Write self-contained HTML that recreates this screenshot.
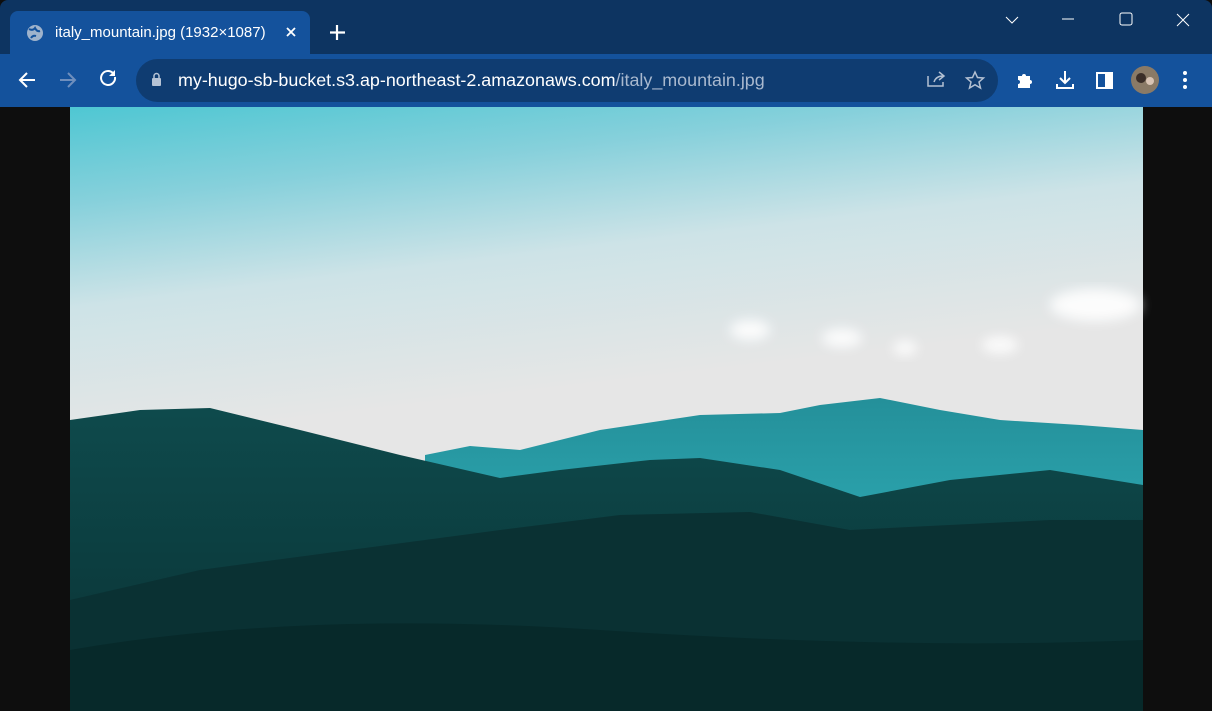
<!DOCTYPE html>
<html><head><style>
body{margin:0;width:1212px;height:711px;overflow:hidden;background:#0e0e0e;font-family:"Liberation Sans",sans-serif;position:relative}
.title{position:absolute;left:0;top:0;width:1212px;height:54px;background:#0d3461;border-radius:8px 8px 0 0}
.tab{position:absolute;left:10px;top:11px;width:300px;height:43px;background:#14529c;border-radius:8px 8px 0 0}
.tb{position:absolute;left:0;top:54px;width:1212px;height:53px;background:#14529c}
.omni{position:absolute;left:136px;top:59px;width:862px;height:43px;border-radius:22px;background:#0f3c71}
.t{position:absolute;color:#fff;white-space:nowrap}
</style></head><body>
<div class="title"></div>
<div class="tab"></div>
<div class="tb"></div>
<div class="omni"></div>
<svg style="position:absolute;left:0;top:0" width="1212" height="107">
<circle cx="35" cy="33" r="8" fill="#9fb3cc"/>
<path d="M29 29 q4 2 6 -1 q2 4 5 3 M31 38 q2-3 5-2" stroke="#14529c" stroke-width="2" fill="none"/>
<path d="M287 28l8 8M295 28l-8 8" stroke="#fff" stroke-width="1.8"/>
<path d="M337 25v15M330 32.5h15" stroke="#fff" stroke-width="2.2"/>
<path d="M1006 17l6 6 6-6" stroke="#fff" stroke-width="1" fill="none"/>
<path d="M1062 19h12" stroke="#fff" stroke-width="1"/>
<rect x="1120" y="13" width="12" height="12" rx="2" stroke="#fff" fill="none"/>
<path d="M1177 14l12 12M1189 14l-12 12" stroke="#fff" stroke-width="1"/>
<path d="M35 80h-15M27 73l-7 7 7 7" stroke="#fff" stroke-width="2" fill="none"/>
<path d="M60 80h15M68 73l7 7-7 7" stroke="#6f8fbd" stroke-width="2" fill="none"/>
<path d="M115 77a7 7 0 1 1-2-4" stroke="#fff" stroke-width="2" fill="none"/><path d="M115 70v6h-6z" fill="#fff"/>
<rect x="152" y="78" width="9" height="8" rx="1" fill="#b6c3d5"/><path d="M154 78v-2a2.5 2.5 0 0 1 5 0v2" stroke="#b6c3d5" stroke-width="1.5" fill="none"/>
<path d="M928 76v10h15v-4M934 82q2-6 9-6M939 72l5 4-5 4" stroke="#b3c0d2" stroke-width="1.5" fill="none"/>
<path d="M975 72l2.5 5.5 6 .5-4.5 4 1.5 6-5.5-3.3-5.5 3.3 1.5-6-4.5-4 6-.5z" stroke="#b3c0d2" stroke-width="1.5" fill="none"/>
<path d="M1018 76h4a2 2 0 0 1 4 0h4v4a2 2 0 0 1 0 4v4h-12v-4a2 2 0 0 0 0-4z" fill="#fff"/>
<path d="M1065 71v12M1060 78l5 5 5-5M1057 84v4h16v-4" stroke="#fff" stroke-width="2" fill="none"/>
<rect x="1097" y="73" width="15" height="15" stroke="#fff" stroke-width="2" fill="none"/><rect x="1105" y="73" width="7" height="15" fill="#fff"/>
<circle cx="1145" cy="80" r="14" fill="#8a7a66"/><circle cx="1141" cy="78" r="5" fill="#3b2e28"/><circle cx="1150" cy="81" r="4" fill="#d9c4b4"/>
<circle cx="1185" cy="73" r="2" fill="#fff"/><circle cx="1185" cy="80" r="2" fill="#fff"/><circle cx="1185" cy="87" r="2" fill="#fff"/>
</svg>
<div class="t" style="left:55px;top:24px;font-size:15px;width:214px;overflow:hidden">italy_mountain.jpg (1932×1087)</div>
<div class="t" style="left:178px;top:70px;font-size:17.9px">my-hugo-sb-bucket.s3.ap-northeast-2.amazonaws.com<span style="color:#a9b9cf">/italy_mountain.jpg</span></div>
<svg style="position:absolute;left:0;top:107px" width="1212" height="604" viewBox="0 107 1212 604">
<defs>
<linearGradient id="sky" x1="0" y1="107" x2="40" y2="450" gradientUnits="userSpaceOnUse"><stop offset="0" stop-color="#4ac6d2"/><stop offset="0.3" stop-color="#86d0db"/><stop offset="0.6" stop-color="#cde3e7"/><stop offset="1" stop-color="#e6e6e6"/></linearGradient>
<linearGradient id="m1" x1="0" y1="400" x2="0" y2="500" gradientUnits="userSpaceOnUse"><stop offset="0" stop-color="#24909a"/><stop offset="1" stop-color="#2aa0aa"/></linearGradient>
<linearGradient id="m2" x1="0" y1="410" x2="0" y2="711" gradientUnits="userSpaceOnUse"><stop offset="0" stop-color="#0e4a4c"/><stop offset="1" stop-color="#0a3234"/></linearGradient>
<filter id="b"><feGaussianBlur stdDeviation="6"/></filter>
</defs>
<rect x="70" y="107" width="1073" height="604" fill="url(#sky)"/>
<g fill="#fff" opacity="0.9" filter="url(#b)"><ellipse cx="1095" cy="305" rx="45" ry="16"/><ellipse cx="750" cy="330" rx="20" ry="10"/><ellipse cx="842" cy="338" rx="20" ry="9"/><ellipse cx="905" cy="348" rx="12" ry="7"/><ellipse cx="1000" cy="345" rx="18" ry="8"/></g>
<path d="M425 455 L470 446 L520 450 L600 430 L700 415 L780 413 L820 405 L880 398 L940 410 L1000 420 L1080 425 L1143 430 V711 H425Z" fill="url(#m1)"/>
<path d="M70 420 L140 410 L210 408 L300 430 L400 455 L500 478 L560 470 L650 460 L700 458 L780 470 L860 497 L950 480 L1050 470 L1143 485 V711 H70Z" fill="url(#m2)"/>
<path d="M70 600 L200 570 L350 550 L500 530 L620 515 L750 512 L850 530 L950 525 L1050 520 L1143 520 V711 H70Z" fill="#0a3133"/>
<path d="M70 650 Q300 610 600 630 Q900 650 1143 640 V711 H70Z" fill="#07292a"/>
</svg>
</body></html>
